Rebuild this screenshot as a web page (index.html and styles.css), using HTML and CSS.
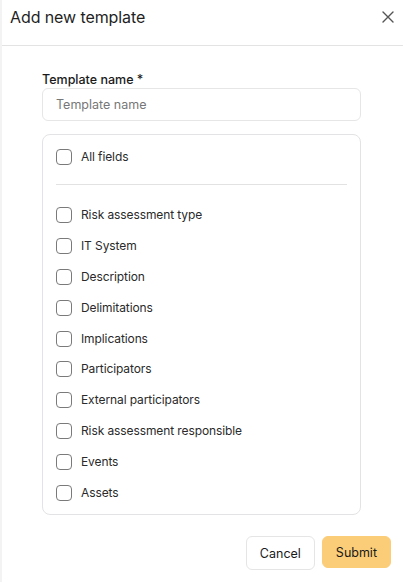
FILE: index.html
```html
<!DOCTYPE html>
<html>
<head>
<meta charset="utf-8">
<link rel="stylesheet" href="styles.css">
</head>
<body>
<div class="dialog">
  <div class="header">
    <h1 class="title">Add new template</h1>
    <button class="close" aria-label="Close">
      <svg width="12" height="12" viewBox="0 0 12 12"><path d="M1 1L11 11M11 1L1 11" stroke="#555" stroke-width="1.4" stroke-linecap="round"/></svg>
    </button>
  </div>
  <div class="body">
    <label class="label">Template name *</label>
    <input class="input" type="text" placeholder="Template name">
    <div class="card">
      <label class="check"><span class="box"></span><span>All fields</span></label>
      <div class="divider"></div>
      <div class="list">
        <label class="check"><span class="box"></span><span>Risk assessment type</span></label>
        <label class="check"><span class="box"></span><span>IT System</span></label>
        <label class="check"><span class="box"></span><span>Description</span></label>
        <label class="check"><span class="box"></span><span>Delimitations</span></label>
        <label class="check"><span class="box"></span><span>Implications</span></label>
        <label class="check"><span class="box"></span><span>Participators</span></label>
        <label class="check"><span class="box"></span><span>External participators</span></label>
        <label class="check"><span class="box"></span><span>Risk assessment responsible</span></label>
        <label class="check"><span class="box"></span><span>Events</span></label>
        <label class="check"><span class="box"></span><span>Assets</span></label>
      </div>
    </div>
  </div>
  <div class="footer">
    <button class="btn cancel">Cancel</button>
    <button class="btn submit">Submit</button>
  </div>
</div>
</body>
</html>
```

FILE: styles.css
```css
* { box-sizing: border-box; }
html, body { margin: 0; padding: 0; background: #f3f3f3; }
body {
  font-family: Inter, "Noto Sans", sans-serif;
  color: #222;
  width: 403px;
  height: 582px;
  overflow: hidden;
}
.dialog {
  margin-left: 2px;
  height: 582px;
  background: #fff;
  display: flex;
  flex-direction: column;
}
.header {
  height: 46px;
  border-bottom: 1px solid #e3e3e3;
  display: flex;
  align-items: center;
  justify-content: space-between;
  padding: 0 9px 11px 8px;
}
.title {
  margin: 0;
  font-size: 16px;
  font-weight: 400;
  color: #1f1f1f;
  letter-spacing: -0.1px;
}
.close {
  border: 0;
  background: none;
  padding: 0;
  width: 12px;
  height: 12px;
  display: flex;
}
.body {
  padding: 26px 42px 0 40px;
  display: flex;
  flex-direction: column;
}
.label {
  font-size: 12.5px;
  font-weight: 500;
  color: #1a1a1a;
  line-height: 16px;
}
.input {
  margin-top: 0;
  height: 33px;
  border: 1px solid #e6e6e6;
  border-radius: 6px;
  padding: 0 13px;
  font-family: inherit;
  font-size: 12.5px;
  color: #222;
  outline: none;
}
.input::placeholder { color: #777; }
.card {
  margin-top: 13px;
  border: 1px solid #e3e3e6;
  border-radius: 8px;
  padding: 13px 13px 12px 13px;
}
.divider {
  height: 1px;
  background: #e2e2e2;
  margin: 18px 0 21px 0;
}
.list {
  display: flex;
  flex-direction: column;
  gap: 12.9px;
}
.check {
  display: flex;
  align-items: center;
  gap: 9px;
  font-size: 12px;
  letter-spacing: -0.1px;
  color: #2a2a2a;
  line-height: 18px;
}
.box {
  width: 16px;
  height: 16px;
  border: 1.3px solid #7a7a7a;
  border-radius: 4px;
  flex: none;
}
.footer {
  margin-top: auto;
  display: flex;
  justify-content: flex-end;
  gap: 7px;
  padding: 0 12px 12px 0;
}
.btn {
  font-family: inherit;
  font-size: 12.5px;
  height: 32px;
  border-radius: 6px;
  padding: 0 13px;
  color: #1a1a1a;
  cursor: pointer;
}
.cancel {
  background: #fff;
  border: 1px solid #e5e5e5;
  height: 34px;
}
.submit {
  background: #fbcd78;
  border: 1px solid #fbcd78;
}
```
